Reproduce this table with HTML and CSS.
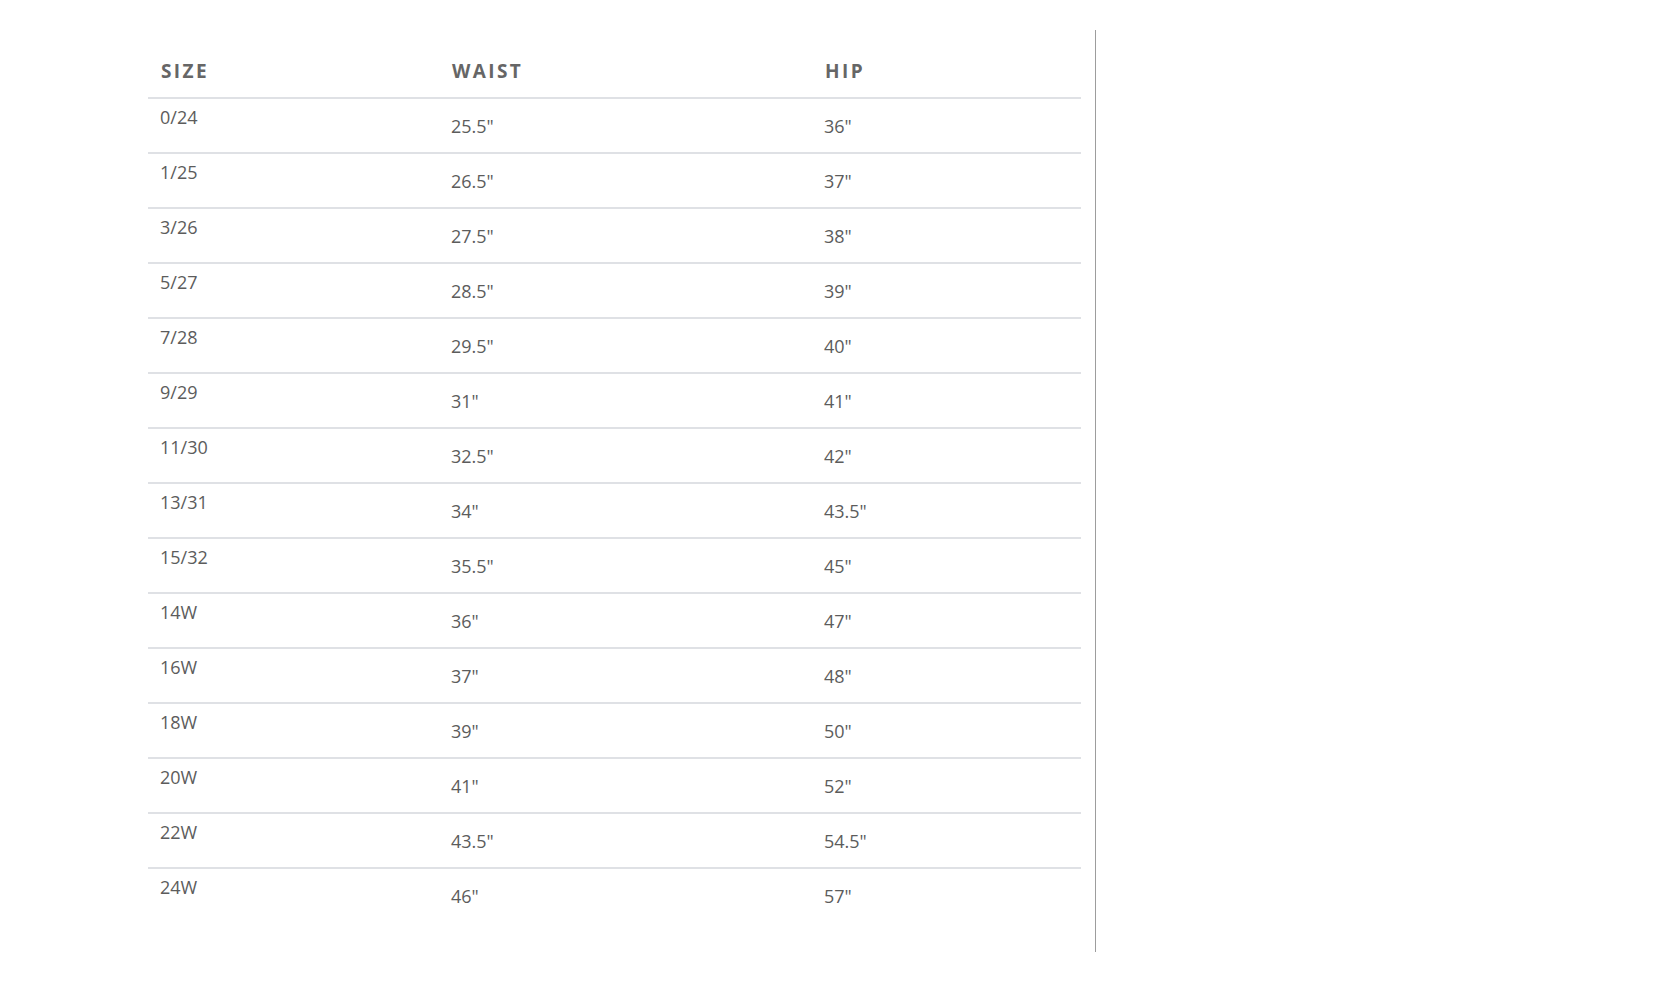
FILE: index.html
```html
<!DOCTYPE html>
<html lang="en">
<head>
<meta charset="utf-8">
<title>Size Chart</title>
<link rel="stylesheet" href="styles.css">
</head>
<body>
<div class="layout">
  <div class="chart">
    <table class="size-table">
      <thead>
        <tr><th class="col-size">SIZE</th><th class="col-waist">WAIST</th><th class="col-hip">HIP</th></tr>
      </thead>
      <tbody>
        <tr><td class="size">0/24</td><td>25.5"</td><td>36"</td></tr>
        <tr><td class="size">1/25</td><td>26.5"</td><td>37"</td></tr>
        <tr><td class="size">3/26</td><td>27.5"</td><td>38"</td></tr>
        <tr><td class="size">5/27</td><td>28.5"</td><td>39"</td></tr>
        <tr><td class="size">7/28</td><td>29.5"</td><td>40"</td></tr>
        <tr><td class="size">9/29</td><td>31"</td><td>41"</td></tr>
        <tr><td class="size">11/30</td><td>32.5"</td><td>42"</td></tr>
        <tr><td class="size">13/31</td><td>34"</td><td>43.5"</td></tr>
        <tr><td class="size">15/32</td><td>35.5"</td><td>45"</td></tr>
        <tr><td class="size">14W</td><td>36"</td><td>47"</td></tr>
        <tr><td class="size">16W</td><td>37"</td><td>48"</td></tr>
        <tr><td class="size">18W</td><td>39"</td><td>50"</td></tr>
        <tr><td class="size">20W</td><td>41"</td><td>52"</td></tr>
        <tr><td class="size">22W</td><td>43.5"</td><td>54.5"</td></tr>
        <tr><td class="size">24W</td><td>46"</td><td>57"</td></tr>
      </tbody>
    </table>
  </div>
  <div class="side"></div>
</div>
</body>
</html>
```

FILE: styles.css
```css
html, body {
  margin: 0;
  padding: 0;
  background: #ffffff;
}

body {
  font-family: "Open Sans", "Noto Sans", "Liberation Sans", sans-serif;
  color: #5c5c5c;
}

.layout {
  display: flex;
  align-items: flex-start;
  padding: 30px 0 0 148px;
}

.chart {
  width: 933px;
}

.side {
  margin-left: 14px;
  width: 1px;
  height: 922px;
  background: #9d9d9d;
}

.size-table {
  width: 100%;
  border-collapse: separate;
  border-spacing: 0;
  table-layout: fixed;
}

.col-size { width: 291px; }
.col-waist { width: 373px; }
.col-hip { width: auto; }

.size-table th {
  height: 69px;
  padding: 29px 0 0 13px;
  text-align: left;
  vertical-align: top;
  font-size: 19px;
  font-weight: 700;
  letter-spacing: 2.4px;
  line-height: 24px;
  color: #666666;
  border-bottom: 2px solid #dfe1e5;
  box-sizing: border-box;
}

.size-table td {
  height: 53px;
  padding: 0 0 0 12px;
  font-size: 18px;
  line-height: 24px;
  vertical-align: middle;
  box-sizing: border-box;
}

.size-table tbody tr + tr td {
  border-top: 2px solid #dfe1e5;
  height: 55px;
}

.size-table td.size {
  vertical-align: top;
  padding-top: 6px;
}
```
